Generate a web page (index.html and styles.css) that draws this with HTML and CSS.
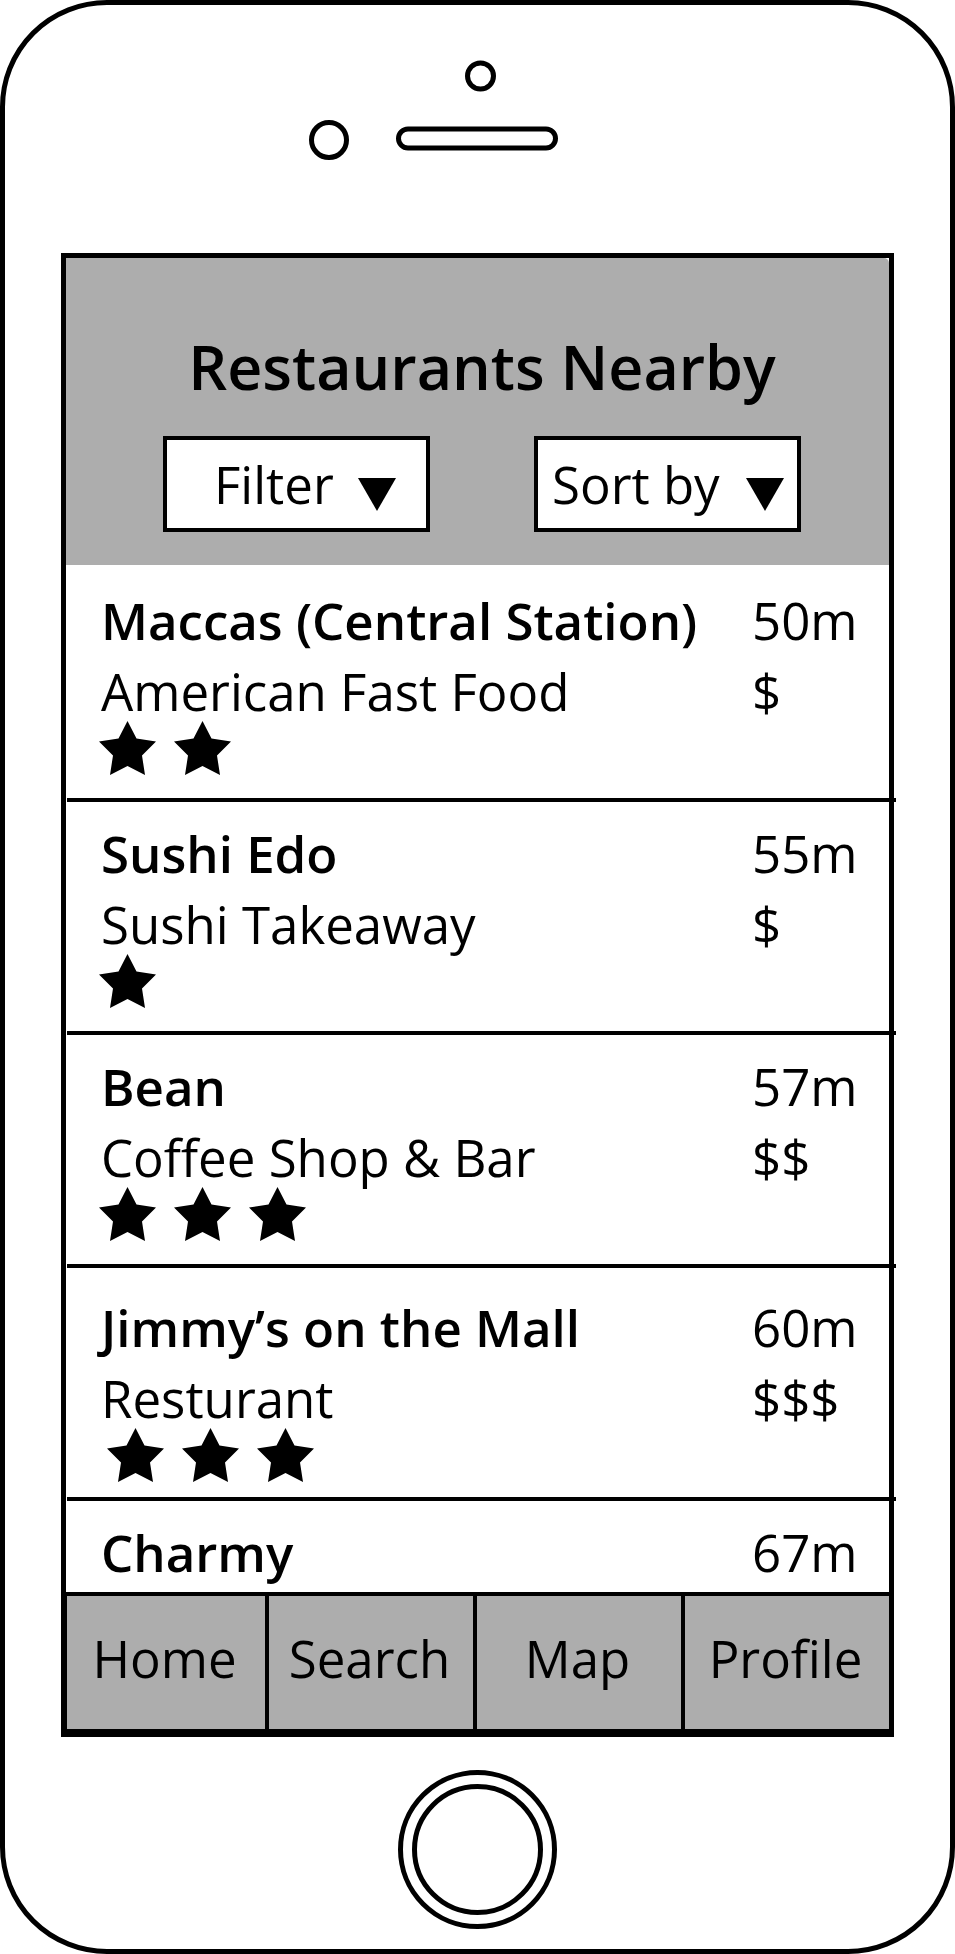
FILE: index.html
```html
<!DOCTYPE html>
<html lang="en">
<head>
<meta charset="utf-8">
<meta name="viewport" content="width=device-width, initial-scale=1">
<title>Restaurants Nearby</title>
<link rel="stylesheet" href="styles.css">
</head>
<body>
<svg class="defs" aria-hidden="true">
  <symbol id="star" viewBox="0 0 57 54"><path d="M28.500 0 37.500 17.500 57 20.500 43 34.500 46 54 28.500 45 11 54 14 34.500 0 20.500 19.500 17.500z"/></symbol>
  <symbol id="caret" viewBox="0 0 38 33"><path d="M0 0h38L19 33z"/></symbol>
</svg>
<div class="phone">
  <svg class="sensors" viewBox="0 0 341 104" aria-hidden="true">
    <circle cx="173.500" cy="17" r="13"/>
    <circle cx="22" cy="81" r="17.500"/>
    <rect x="91.500" y="70" width="157" height="19" rx="9.500"/>
  </svg>

  <main class="screen">
    <header class="header">
      <h1 class="title">Restaurants Nearby</h1>
      <div class="controls">
        <div class="picker">
          <select class="picker-select filter" aria-label="Filter"><option>Filter</option></select>
          <svg class="caret" aria-hidden="true"><use href="#caret"/></svg>
        </div>
        <div class="picker">
          <select class="picker-select sort" aria-label="Sort by"><option>Sort by</option></select>
          <svg class="caret caret-end" aria-hidden="true"><use href="#caret"/></svg>
        </div>
      </div>
    </header>

    <ul class="list">
      <li class="row">
        <div class="info">
          <h2 class="name">Maccas (Central Station)</h2>
          <p class="kind">American Fast Food</p>
          <div class="stars" role="img" aria-label="2 stars"><svg class="star"><use href="#star"/></svg><svg class="star"><use href="#star"/></svg></div>
        </div>
        <div class="facts"><p>50m</p><p>$</p></div>
      </li>
      <li class="row">
        <div class="info">
          <h2 class="name">Sushi Edo</h2>
          <p class="kind">Sushi Takeaway</p>
          <div class="stars" role="img" aria-label="1 star"><svg class="star"><use href="#star"/></svg></div>
        </div>
        <div class="facts"><p>55m</p><p>$</p></div>
      </li>
      <li class="row">
        <div class="info">
          <h2 class="name">Bean</h2>
          <p class="kind">Coffee Shop &amp; Bar</p>
          <div class="stars" role="img" aria-label="3 stars"><svg class="star"><use href="#star"/></svg><svg class="star"><use href="#star"/></svg><svg class="star"><use href="#star"/></svg></div>
        </div>
        <div class="facts"><p>57m</p><p>$$</p></div>
      </li>
      <li class="row row-low">
        <div class="info">
          <h2 class="name">Jimmy’s on the Mall</h2>
          <p class="kind">Resturant</p>
          <div class="stars" role="img" aria-label="3 stars"><svg class="star"><use href="#star"/></svg><svg class="star"><use href="#star"/></svg><svg class="star"><use href="#star"/></svg></div>
        </div>
        <div class="facts"><p>60m</p><p>$$$</p></div>
      </li>
      <li class="row row-cut">
        <div class="info"><h2 class="name">Charmy</h2></div>
        <div class="facts"><p>67m</p></div>
      </li>
    </ul>

    <nav class="tabs">
      <a class="tab" href="#home">Home</a>
      <a class="tab" href="#search">Search</a>
      <a class="tab" href="#map">Map</a>
      <a class="tab" href="#profile">Profile</a>
    </nav>
  </main>

  <button class="home-button" type="button" aria-label="Home button"></button>
</div>
</body>
</html>
```
FILE: styles.css
```css
* {
  box-sizing: border-box;
}

body {
  margin: 0;
  background: #fff;
  color: #000;
  font-family: "Open Sans", "Noto Sans", sans-serif;
  font-size: 51px;
  line-height: 64px;
}

h1, h2, p, ul {
  margin: 0;
  padding: 0;
}

.defs {
  display: none;
}

.phone {
  display: flex;
  flex-direction: column;
  align-items: center;
  padding: 54px 56px 20px;
  border: 5px solid #000;
  border-radius: 107px;
}

.sensors {
  width: 341px;
  height: 104px;
  fill: none;
  stroke: #000;
  stroke-width: 5px;
}

.screen {
  align-self: stretch;
  margin: 90px 0 33px;
  border: 5px solid #000;
  border-bottom-width: 8px;
}

.header {
  padding: 65px 88px 33px 97px;
  background: #adadad;
  border-top-right-radius: 5px;
}

.title {
  font-size: 61px;
  font-weight: 600;
  line-height: 88px;
  text-align: center;
  white-space: nowrap;
}

.controls {
  display: flex;
  justify-content: space-between;
  margin-top: 25px;
}

.picker {
  display: grid;
  width: 267px;
}

.picker-select {
  grid-area: 1 / 1;
  width: 100%;
  height: 96px;
  margin: 0;
  border: 4px solid #000;
  border-radius: 0;
  background: #fff;
  color: #000;
  font: inherit;
  appearance: none;
}

.filter {
  padding: 0 0 0 47px;
}

.sort {
  padding: 0 0 0 14px;
}

.caret {
  grid-area: 1 / 1;
  place-self: center end;
  width: 38px;
  height: 33px;
  margin: 20px 34px 0 0;
  pointer-events: none;
}

.caret-end {
  margin-right: 17px;
}

.list {
  padding-top: 4px;
  list-style: none;
}

.row {
  display: flex;
  justify-content: space-between;
  margin: 0 -7px 0 1px;
  padding: 19px 0 23px 32px;
  border-bottom: 4px solid #000;
}

.row-low {
  padding-top: 27px;
  padding-bottom: 15px;
}

.row-low .stars {
  padding-left: 8px;
}

.row-cut {
  padding-bottom: 8px;
  border-bottom: 0;
}

.info,
.facts {
  display: grid;
  align-content: start;
}

.name {
  margin-bottom: 7px;
  padding-left: 2px;
  font-size: 51px;
  font-weight: 600;
  line-height: 64px;
  white-space: nowrap;
}

.kind {
  padding-left: 2px;
}

.row-cut .name {
  margin-bottom: 0;
}

.facts {
  row-gap: 7px;
  width: 144px;
}

.stars {
  display: flex;
  gap: 18px;
  margin-top: -2px;
}

.star {
  width: 57px;
  height: 54px;
}

.tabs {
  display: grid;
  grid-template-columns: 198px repeat(3, 1fr);
  gap: 4px;
  padding: 4px 0 0 1px;
  background: #000;
}

.tab {
  display: grid;
  place-items: center;
  height: 133px;
  padding: 0 3px 10px 0;
  background: #adadad;
  color: inherit;
  text-decoration: none;
}

.home-button {
  width: 159px;
  height: 159px;
  padding: 0;
  border: 5px solid #000;
  border-radius: 50%;
  outline: 5px solid #000;
  outline-offset: -19px;
  background: #fff;
}
```
